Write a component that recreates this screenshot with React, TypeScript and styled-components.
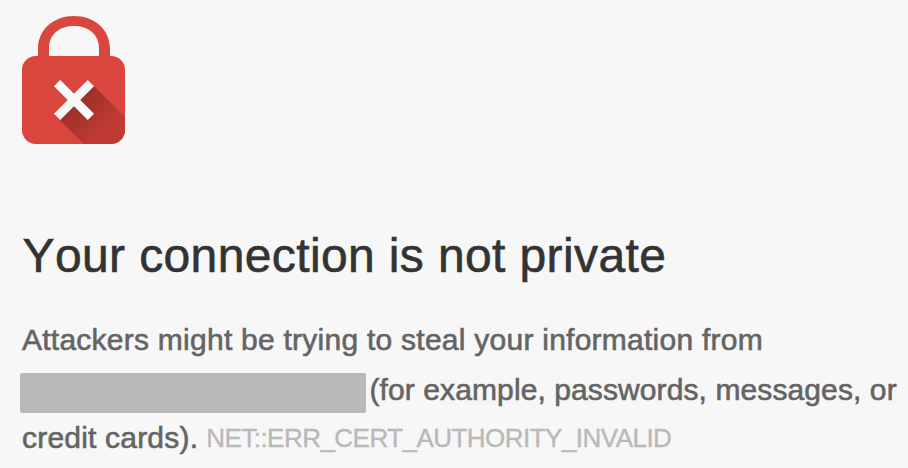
import React from "react";
import styled, { createGlobalStyle } from "styled-components";

const GlobalStyle = createGlobalStyle`
  body {
    margin: 0;
    background: #f7f7f7;
    font-family: "Liberation Sans", Arial, sans-serif;
  }
`;

const Page = styled.main`
  box-sizing: border-box;
  width: 908px;
  height: 468px;
  padding: 15px 0 0 22px;
  overflow: hidden;
  background: #f7f7f7;
`;

const LockIcon = styled.svg`
  display: block;
  width: 104px;
  height: 130px;
`;

const Title = styled.h1`
  margin: 81px 0 0 0.5px;
  font-size: 48px;
  font-weight: 400;
  font-kerning: none;
  letter-spacing: 0.38px;
  line-height: 60px;
  color: #333;
  white-space: nowrap;
  -webkit-text-stroke: 0.6px #333;
`;

const Message = styled.div`
  margin-top: 29px;
  color: #646464;
`;

const Line = styled.div<{ $height: number; $spacing?: number }>`
  display: flex;
  height: ${(p) => p.$height}px;
  line-height: ${(p) => p.$height}px;
  font-size: 30px;
  letter-spacing: ${(p) => p.$spacing ?? 0}px;
  white-space: pre;
  -webkit-text-stroke: 0.6px #646464;
`;

const Redacted = styled.span`
  width: 346px;
  height: 40px;
  margin: 8px 3.5px 0 -2px;
  border-radius: 2px;
  background: #b9b9b9;
`;

const ErrorCode = styled.span`
  margin-left: 8px;
  font-size: 26px;
  letter-spacing: -0.53px;
  color: #b9b9b9;
  -webkit-text-stroke: 0.4px #b9b9b9;
`;

export default function App() {
  return (
    <>
      <GlobalStyle />
      <Page>
        <LockIcon viewBox="22 15 104 130" aria-hidden="true">
          <defs>
            <linearGradient id="shade" gradientUnits="userSpaceOnUse" x1="74" y1="100" x2="105" y2="131">
              <stop offset="0" stopColor="#98302a" />
              <stop offset="1" stopColor="#bf3b33" />
            </linearGradient>
            <linearGradient id="cross" gradientUnits="userSpaceOnUse" x1="62" y1="88" x2="88" y2="114">
              <stop offset="0" stopColor="#fff" />
              <stop offset="0.55" stopColor="#f5f5f5" />
              <stop offset="1" stopColor="#fff" />
            </linearGradient>
            <clipPath id="body">
              <rect x="22" y="56" width="103" height="88" rx="14" />
            </clipPath>
          </defs>
          <path
            d="M38 57V49C38 29 54 16 74 16S110 29 110 49V57H99V48C99 34 88 26 74 26S49 34 49 48V57Z"
            fill="#da453d"
          />
          <rect x="22" y="56" width="103" height="88" rx="14" fill="#da453d" />
          <path
            d="M94 86.3L130 122.3V148H87.7L60 120.3L74 100Z"
            fill="url(#shade)"
            clipPath="url(#body)"
          />
          <path
            d="M60.2 80L74 93.8L87.8 80L94 86.2L80.2 100L94 113.8L87.8 120L74 106.2L60.2 120L54 113.8L67.8 100L54 86.2Z"
            fill="url(#cross)"
          />
        </LockIcon>
        <Title>Your connection is not private</Title>
        <Message>
          <Line $height={50} $spacing={0.25}>
            Attackers might be trying to steal your information from
          </Line>
          <Line $height={49} $spacing={0.1}>
            <Redacted />
            <span>(for example, passwords, messages, or</span>
          </Line>
          <Line $height={48} $spacing={0.2}>
            <span>credit cards).</span>
            <ErrorCode>NET::ERR_CERT_AUTHORITY_INVALID</ErrorCode>
          </Line>
        </Message>
      </Page>
    </>
  );
}
